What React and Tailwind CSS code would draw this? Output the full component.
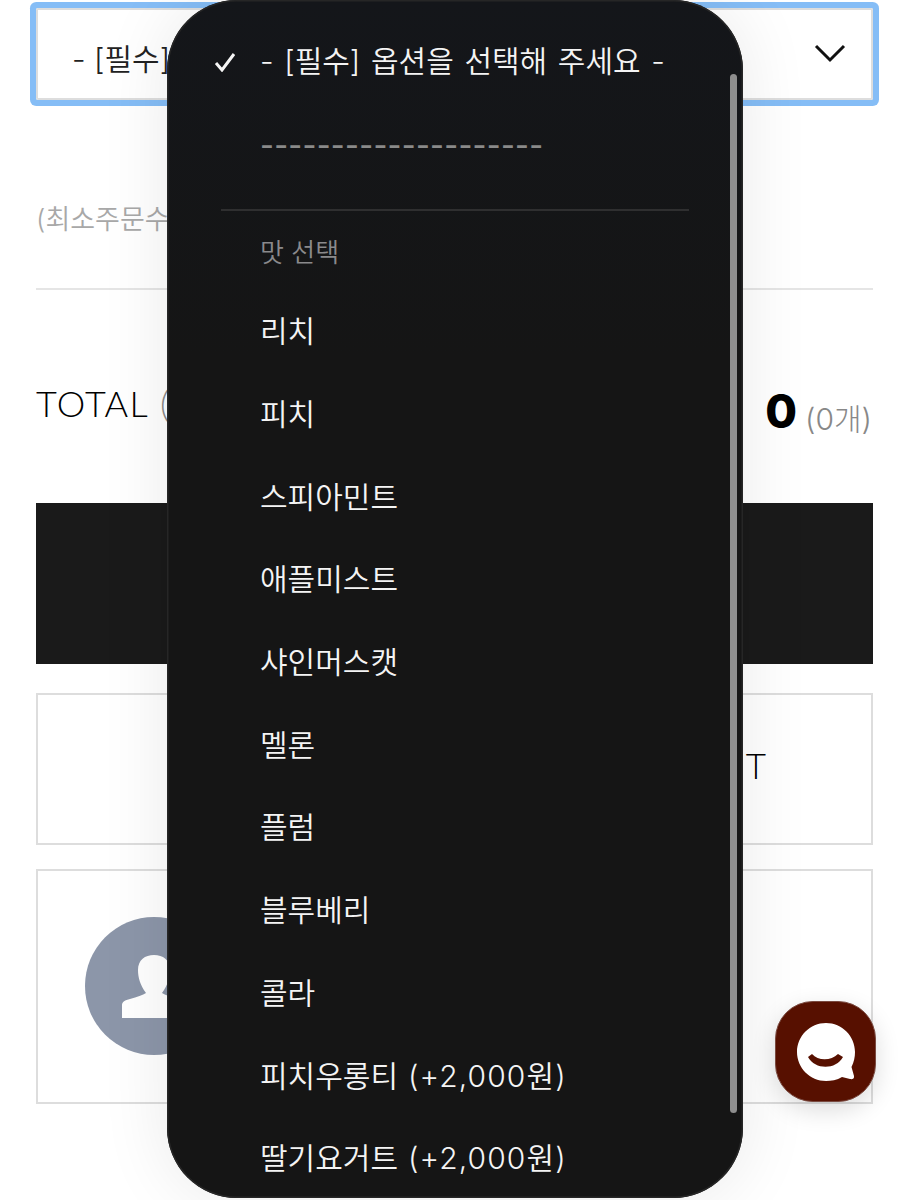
import React from "react";

const KR = { fontFamily: 'Inter, "Noto Sans CJK KR", sans-serif' };
const items = [["리치"],["피치"],["스피아민트"],["애플미스트"],["샤인머스캣"],["멜론"],["플럼"],["블루베리"],["콜라"],["피치우롱티","(+2,000원)"],["딸기요거트","(+2,000원)"]];

export default function App() {
  return (
    <div className="relative h-[1200px] w-[909px] overflow-hidden bg-white text-black" style={KR}>
      <div className="flex flex-col px-[36px]">
        <div className="mt-[8px] flex h-[92px] items-center justify-between rounded-[2px] border-2 border-[#dddddd] pl-[34px] pr-[24px] ring-[6px] ring-[#85bdf6]">
          <span className="mt-[10px] text-[30px] font-[350] leading-none text-[#222222]">- [필수]</span>
          <svg width="34" height="22" viewBox="0 0 34 22" fill="none" stroke="#111111" strokeWidth="3">
            <path d="M3 3 L17 17 L31 3" />
          </svg>
        </div>
        <div className="mt-[103px] text-[27px] font-[350] leading-[34px] text-[#a8a8a8]">(최소주문수</div>
        <div className="mt-[51px] h-[2px] bg-[#e5e5e5]" />
        <div className="mt-[93px] flex h-[46px] items-center justify-between">
          <span className="-mt-[6px] text-[36px] font-light leading-none tracking-[1.3px]" style={{ fontFamily: 'Lato, sans-serif' }}>
            TOTAL <span className="ml-[1px] text-[#888888]">(</span>
          </span>
          <span className="flex h-[46px] items-center gap-[8px] pr-[1px]">
            <span className="mt-[10px] text-[46px] font-extrabold leading-none">0</span>
            <span className="mt-[26px] text-[30px] font-light leading-none text-[#888888]">(0개)</span>
          </span>
        </div>
        <div className="mt-[74px] h-[161px] bg-[#1a1a1a]" />
        <div className="mt-[29px] flex h-[152px] items-center justify-end border-2 border-[#dddddd] pr-[105px]">
          <span className="-mt-[8px] text-[35px] font-light leading-none" style={{ fontFamily: 'Lato, sans-serif' }}>T</span>
        </div>
        <div className="mt-[24px] flex h-[235px] items-center border-2 border-[#dddddd] pl-[47px]">
          <svg width="138" height="138" viewBox="0 0 138 138" className="-mt-[2px]" aria-hidden="true">
            <circle cx="69" cy="69" r="69" fill="#8c96a9" />
            <path d="M37 101 V88 C37 85 40 83 45 82 C52 80 58 78 61 76 C55 68 53 60 53 53 C53 43 60 38 69 38 C78 38 85 43 85 53 C85 60 83 68 77 76 C80 78 86 80 93 82 C98 83 101 85 101 88 V101 Z" fill="#ffffff" />
          </svg>
        </div>
      </div>

      <div className="absolute left-[167px] top-0 flex h-[1198px] w-[576px] flex-col overflow-hidden rounded-[70px] bg-[linear-gradient(#14161a,#151515_30%)] pl-[93px] text-[30px] font-[350] text-[#f4f4f4] shadow-[0_0_70px_rgba(0,0,0,0.09),inset_0_0_0_1.5px_#262626]">
        <div className="relative mt-[19px] flex h-[83px] shrink-0 items-center">
          <svg width="22" height="20" viewBox="0 0 22 20" className="absolute -left-[46px] top-[33px]" fill="none" stroke="#f5f5f5" strokeWidth="3">
            <path d="M2 11 L8 18 L20 2" />
          </svg>
          <span className="leading-none [word-spacing:2.2px]">- [필수] 옵션을 선택해 주세요 -</span>
        </div>
        <div className="flex h-[83px] shrink-0 items-center text-[#8a8a8a]">
          <span className="mt-[2px] font-medium leading-none tracking-[0.3px]">--------------------</span>
        </div>
        <div className="-ml-[39px] mt-[24px] h-[2px] w-[468px] shrink-0 bg-[#2f2f30]" />
        <div className="mt-[25px] shrink-0 text-[26px] leading-[34px] text-[#8a8a8c]">맛 선택</div>
        <div className="mt-[20px] flex shrink-0 flex-col">
          {items.map(([name, price]) => (
            <div key={name} className="flex h-[82.7px] shrink-0 items-center gap-[10px] leading-none">
              <span>{name}</span>
              {price && <span className="tracking-[1.1px]">{price}</span>}
            </div>
          ))}
        </div>
        <div className="absolute right-[6px] top-[74px] h-[1039px] w-[7px] rounded-full bg-[#8e8e8e]" />
      </div>

      <div className="absolute left-[775px] top-[1001px] flex h-[101px] w-[101px] items-center justify-center rounded-[38px] border border-[#7a4a40] bg-[#571000] shadow-[0_8px_24px_rgba(0,0,0,0.14)]">
        <svg width="60" height="60" viewBox="0 0 60 60" aria-label="chat">
          <path d="M30 1 C46 1 59 14 59 30 C59 35 58 40 55.500 45 L58 54 C58.500 57 56 57.500 54 57 L46 55 C41 58 35 59 30 59 C14 59 1 46 1 30 C1 14 14 1 30 1 Z" fill="#ffffff" />
          <path d="M12 35 L16 32 C22 39 35 39 42 32 L47 35 C40 48 19 48 12 35 Z" fill="#571000" />
        </svg>
      </div>
    </div>
  );
}
